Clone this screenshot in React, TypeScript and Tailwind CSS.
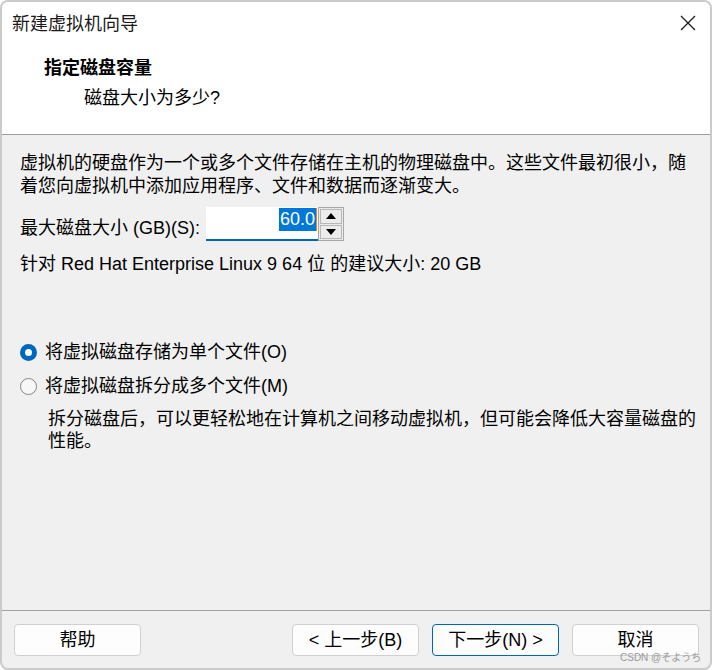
import React from "react";

const F = "font-['Liberation_Sans','Noto_Sans_CJK_SC',sans-serif]";

function Btn({ children, primary }: { children: React.ReactNode; primary?: boolean }) {
  return (
    <div
      className={`w-[127px] h-[32px] rounded-[4px] bg-[#fdfdfd] flex items-center justify-center text-[18px] text-black border ${
        primary ? "border-[#0067c0]" : "border-[#d0d0d0]"
      }`}
    >
      {children}
    </div>
  );
}

function Radio({ checked }: { checked?: boolean }) {
  return checked ? (
    <div className="w-[17px] h-[17px] rounded-full bg-[#0067c0] flex items-center justify-center">
      <div className="w-[7px] h-[7px] rounded-full bg-white" />
    </div>
  ) : (
    <div className="w-[17px] h-[17px] rounded-full border border-[#858585] bg-[#f7f7f7]" />
  );
}

export default function App() {
  return (
    <div
      className={`${F} relative w-[712px] h-[670px] bg-[#f0f0f0] border-2 border-[#cbcbcb] rounded-[8px] overflow-hidden flex flex-col text-black`}
    >
      {/* header */}
      <div className="bg-white h-[133px] border-b border-[#a0a0a0] shrink-0">
        <div className="h-[44px] flex items-center justify-between pl-[10px] pr-[14px]">
          <span className="text-[18px] text-[#1a1a1a]">新建虚拟机向导</span>
          <svg width="16" height="16" viewBox="0 0 16 16" className="mt-[-2px]">
            <path d="M1 1 L15 15 M15 1 L1 15" stroke="#1a1a1a" strokeWidth="1.3" />
          </svg>
        </div>
        <div className="pl-[42px] mt-[10px] leading-[24px] text-[18px] font-bold">指定磁盘容量</div>
        <div className="pl-[82px] mt-[6px] leading-[24px] text-[18px]">磁盘大小为多少?</div>
      </div>

      {/* body */}
      <div className="flex-1 pl-[18px] pr-[10px] pt-[17px] text-[18px]">
        <p className="leading-[23px]">
          虚拟机的硬盘作为一个或多个文件存储在主机的物理磁盘中。这些文件最初很小，随着您向虚拟机中添加应用程序、文件和数据而逐渐变大。
        </p>
        <div className="mt-[9px] flex items-end h-[34px]">
          <span className="leading-[23px] mb-[1px]">最大磁盘大小 (GB)(S):</span>
          <div className="ml-[6px] w-[112px] h-[34px] bg-white border-b-2 border-[#0067c0] flex items-start justify-end pt-[1px] pr-[1px]">
            <span className="bg-[#0078d7] text-white leading-[23px] px-[1px]">60.0</span>
            <div className="w-[1px] h-[23px] bg-[#e08a2c]" />
          </div>
          <div className="w-[26px] h-[34px] border border-[#a8a8a8] bg-[#e9e9e9] flex flex-col p-[1px] gap-[1px]">
            <div className="flex-1 border border-[#b8b8b8] bg-[#ececec] flex items-center justify-center">
              <svg width="10" height="6" viewBox="0 0 10 6">
                <path d="M0 6 L5 0 L10 6 Z" fill="#000" />
              </svg>
            </div>
            <div className="flex-1 border border-[#b8b8b8] bg-[#ececec] flex items-center justify-center">
              <svg width="10" height="6" viewBox="0 0 10 6">
                <path d="M0 0 L10 0 L5 6 Z" fill="#000" />
              </svg>
            </div>
          </div>
        </div>
        <p className="mt-[12px] leading-[23px]">针对 Red Hat Enterprise Linux 9 64 位 的建议大小: 20 GB</p>

        <div className="mt-[65px] flex items-center gap-[8px] h-[23px]">
          <Radio checked />
          <span className="leading-[23px]">将虚拟磁盘存储为单个文件(O)</span>
        </div>
        <div className="mt-[11px] flex items-center gap-[8px] h-[23px]">
          <Radio />
          <span className="leading-[23px]">将虚拟磁盘拆分成多个文件(M)</span>
        </div>
        <p className="mt-[10px] ml-[28px] leading-[22px]">
          拆分磁盘后，可以更轻松地在计算机之间移动虚拟机，但可能会降低大容量磁盘的性能。
        </p>
      </div>

      {/* footer */}
      <div className="h-[58px] shrink-0 border-t border-[#a0a0a0] pt-[13px] pl-[12px] pr-[11px] flex items-start">
        <Btn>帮助</Btn>
        <div className="flex-1" />
        <div className="flex gap-[13px]">
          <Btn>{"< 上一步(B)"}</Btn>
          <Btn primary>{"下一步(N) >"}</Btn>
          <Btn>取消</Btn>
        </div>
      </div>

      <div className="absolute left-[618px] top-[650px] text-[10px] leading-[12px] text-[#9a9a9a] font-['Liberation_Sans','Noto_Sans_CJK_JP',sans-serif]">
        CSDN @そようち
      </div>
    </div>
  );
}
